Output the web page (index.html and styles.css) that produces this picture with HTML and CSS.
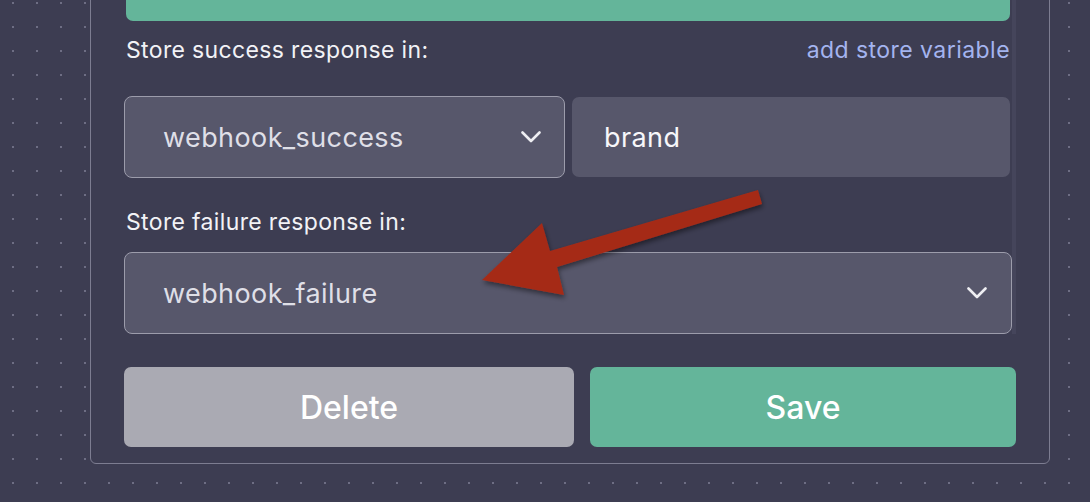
FILE: index.html
```html
<!DOCTYPE html>
<html>
<head>
<meta charset="utf-8">
<link rel="stylesheet" href="styles.css">
</head>
<body>
<div class="page">
  <div class="panel">
    <div class="scroll">
      <div class="fields">
        <button class="btn-test">Test webhook settings</button>
        <div class="label-row">
          <span class="label">Store success response in:</span>
          <a class="link">add store variable</a>
        </div>
        <div class="success-row">
          <div class="select">
            <span class="select-text">webhook_success</span>
            <svg class="chev" width="20" height="12" viewBox="0 0 20 12"><path d="M1.5 1.5 L10 10 L18.5 1.5" fill="none" stroke="#eeeef2" stroke-width="2.6" stroke-linecap="round" stroke-linejoin="round"/></svg>
          </div>
          <div class="input"><span class="input-text">brand</span></div>
        </div>
        <div class="label label-failure">Store failure response in:</div>
        <div class="select select-wide">
          <span class="select-text">webhook_failure</span>
          <svg class="chev" width="20" height="12" viewBox="0 0 20 12"><path d="M1.5 1.5 L10 10 L18.5 1.5" fill="none" stroke="#eeeef2" stroke-width="2.6" stroke-linecap="round" stroke-linejoin="round"/></svg>
        </div>
      </div>
      <div class="scrollbar"></div>
    </div>
    <div class="actions">
      <button class="btn btn-delete">Delete</button>
      <button class="btn btn-save">Save</button>
    </div>
  </div>
</div>
<svg class="arrow" width="1090" height="502" viewBox="0 0 1090 502">
  <defs>
    <filter id="sh" x="-10%" y="-10%" width="130%" height="140%">
      <feDropShadow dx="1" dy="3" stdDeviation="2.5" flood-color="#000" flood-opacity="0.45"/>
    </filter>
  </defs>
  <polygon points="482,280 542,223 550,251 758,190 762,204 557,267 564,295" fill="#a52b18" filter="url(#sh)"/>
</svg>
</body>
</html>
```

FILE: styles.css
```css
* { box-sizing: border-box; }

html, body {
  margin: 0;
  padding: 0;
  width: 1090px;
  height: 502px;
  overflow: hidden;
}

body {
  position: relative;
  background-color: #3d3d52;
  background-image: radial-gradient(circle at 1px 1px, #6e6e84 0.9px, transparent 1.3px);
  background-size: 24px 24px;
  background-position: 12px 2px;
  font-family: Inter, "Noto Sans", sans-serif;
  color: #f2f2f6;
}

.page {
  padding-left: 90px;
}

.panel {
  width: 960px;
  margin-top: -60px;
  border: 1px solid #7d7d91;
  border-radius: 6px;
  background: #3d3d52;
  padding: 0 33px 16px 33px;
}

.scroll {
  display: flex;
}

.fields {
  flex: 1;
  display: flex;
  flex-direction: column;
}

.scrollbar {
  width: 4px;
  background: #45455b;
}

.btn-test {
  height: 80px;
  margin: 0 2px;
  border: none;
  border-radius: 7px;
  background: #64b59a;
  color: #fff;
  font-family: Inter, sans-serif;
  font-size: 32px;
  font-weight: 500;
}

.label-row {
  display: flex;
  justify-content: space-between;
  align-items: baseline;
  margin-top: 15px;
  padding-right: 2px;
}

.label {
  font-size: 23px;
  line-height: 28px;
  letter-spacing: 0.35px;
  color: #f2f2f6;
  padding-left: 2px;
}

.link {
  font-size: 23px;
  line-height: 28px;
  letter-spacing: 0.45px;
  color: #a4b4ef;
}

.success-row {
  display: grid;
  grid-template-columns: 441px 1fr;
  gap: 7px;
  margin-top: 32px;
  padding-right: 2px;
}

.select {
  height: 82px;
  display: flex;
  align-items: center;
  justify-content: space-between;
  background: #57576b;
  border: 1px solid #9c9cab;
  border-radius: 8px;
  padding: 0 23px 0 38px;
}

.select-text {
  font-size: 27px;
  letter-spacing: 0.4px;
  color: #dfdfe7;
}

.chev {
  display: block;
}

.input {
  height: 80px;
  align-self: center;
  display: flex;
  align-items: center;
  background: #57576b;
  border-radius: 7px;
  padding-left: 32px;
}

.input-text {
  font-size: 27px;
  letter-spacing: 0.4px;
  color: #f7f7fa;
}

.label-failure {
  margin-top: 30px;
}

.select-wide {
  margin-top: 16px;
  padding-right: 24px;
}

.actions {
  display: grid;
  grid-template-columns: 450px 1fr;
  gap: 16px;
  margin-top: 33px;
}

.btn {
  height: 80px;
  border: none;
  border-radius: 7px;
  font-family: Inter, sans-serif;
  font-size: 32px;
  font-weight: 500;
  color: #ffffff;
}

.btn-delete {
  background: #aaaab3;
}

.btn-save {
  background: #64b59a;
}

.arrow {
  position: absolute;
  left: 0;
  top: 0;
}
```
